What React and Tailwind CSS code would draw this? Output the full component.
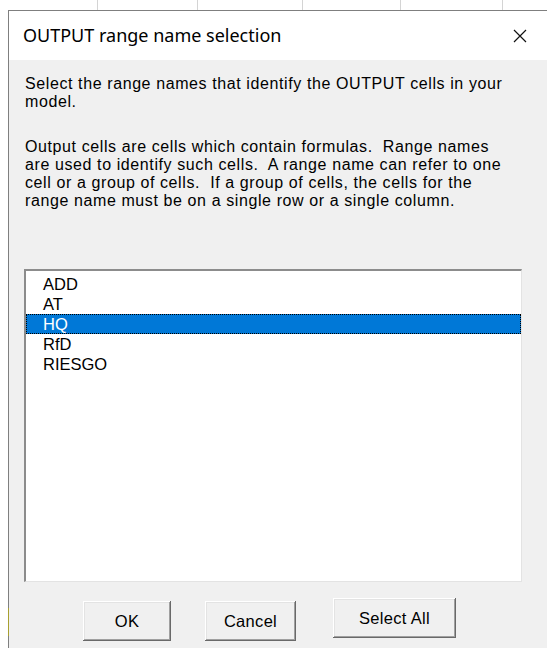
import React from "react";

const intro = ["Select the range names that identify the OUTPUT cells in your", "model."];
const details = [
  "Output cells are cells which contain formulas.  Range names",
  "are used to identify such cells.  A range name can refer to one",
  "cell or a group of cells.  If a group of cells, the cells for the",
  "range name must be on a single row or a single column.",
];
const rangeNames = ["ADD", "AT", "HQ", "RfD", "RIESGO"];

const bevel =
  "shadow-[inset_-1px_-1px_0_#696969,inset_1px_1px_0_#ffffff,inset_-2px_-2px_0_#a0a0a0,inset_2px_2px_0_#e3e3e3]";

function Button({ label, width, offset }) {
  return (
    <button
      className={`h-[40px] bg-[#f0f0f0] text-[16.5px] tracking-[0.3px] text-black ${bevel} ${width} ${offset}`}
      style={{ fontFamily: "'Liberation Sans', Arial, sans-serif" }}
    >
      {label}
    </button>
  );
}

export default function App() {
  return (
    <div className="w-[547px] h-[648px] bg-white flex flex-col overflow-hidden">
      {/* sheet grid peeking above the dialog */}
      <div className="h-[10px] flex">
        <div className="w-[97px]" />
        <div className="w-px h-full bg-[#d4d4d4]" />
        <div className="w-[99px]" />
        <div className="w-px h-full bg-[#d4d4d4]" />
        <div className="w-[104px]" />
        <div className="w-px h-full bg-[#d4d4d4]" />
        <div className="w-[97px]" />
        <div className="w-px h-full bg-[#d4d4d4]" />
        <div className="w-[101px]" />
        <div className="w-px h-full bg-[#d4d4d4]" />
      </div>

      <div className="flex-1 flex">
        <div className="w-[8px]" />
        {/* left window edge, with the sheet's yellow cell edge showing through */}
        <div className="w-px flex flex-col">
          <div className="h-[598px] bg-[#7f7f7f]" />
          <div className="h-[28px] bg-[#a8a030]" />
          <div className="flex-1 bg-[#7f7f7f]" />
        </div>

        <div className="flex-1 flex flex-col border-t border-[#7f7f7f]">
          <div
            className="h-[49px] bg-white flex items-center justify-between pl-[14px] pr-[20px]"
            style={{ fontFamily: "'Noto Sans', 'Open Sans', sans-serif" }}
          >
            <span className="text-[18px] text-black">OUTPUT range name selection</span>
            <svg width="14" height="14" viewBox="0 0 14 14">
              <path d="M1 1L13 13M13 1L1 13" stroke="#111" strokeWidth="1.2" />
            </svg>
          </div>

          <div
            className="flex-1 bg-[#f0f0f0] flex flex-col pl-[15px]"
            style={{ fontFamily: "'Liberation Sans', Arial, sans-serif" }}
          >
            <div className="pl-px pt-[15px] text-[16px] leading-[18px] tracking-[0.6px] text-black whitespace-pre">
              {intro.map((line) => (
                <div key={line}>{line}</div>
              ))}
              <div className="h-[27px]" />
              {details.map((line) => (
                <div key={line}>{line}</div>
              ))}
            </div>

            <div className="mt-[59px] w-[498px] h-[313px] bg-white border-t-2 border-l-2 border-t-[#8c8c8c] border-l-[#8c8c8c] border-r border-b border-r-[#e3e3e3] border-b-[#e3e3e3] pt-[3px]">
              {rangeNames.map((name) => (
                <div
                  key={name}
                  className={
                    name === "HQ"
                      ? "h-[20px] leading-[18px] pl-[16px] text-[16.5px] bg-[#0078d7] text-white border border-dotted border-black"
                      : "h-[20px] leading-[20px] pl-[17px] text-[16.5px] text-black"
                  }
                >
                  {name}
                </div>
              ))}
            </div>

            <div className="flex items-start mt-[16px]">
              <Button label="OK" width="w-[88px]" offset="ml-[59px] mt-[3px]" />
              <Button label="Cancel" width="w-[91px]" offset="ml-[34px] mt-[3px]" />
              <Button label="Select All" width="w-[123px]" offset="ml-[37px]" />
            </div>
          </div>
        </div>
      </div>
    </div>
  );
}
